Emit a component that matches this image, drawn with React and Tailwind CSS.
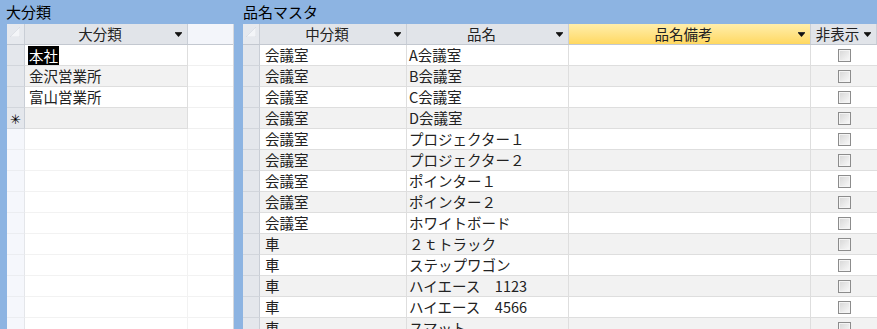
import React from "react";

const FONT = { fontFamily: '"Noto Sans CJK JP", "Noto Sans", sans-serif' };

const items = [
  ["会議室", "A会議室"],
  ["会議室", "B会議室"],
  ["会議室", "C会議室"],
  ["会議室", "D会議室"],
  ["会議室", "プロジェクター１"],
  ["会議室", "プロジェクター２"],
  ["会議室", "ポインター１"],
  ["会議室", "ポインター２"],
  ["会議室", "ホワイトボード"],
  ["車", "２ｔトラック"],
  ["車", "ステップワゴン"],
  ["車", "ハイエース　1123"],
  ["車", "ハイエース　4566"],
  ["車", "スマット"],
];

const Arrow = () => (
  <svg width="7" height="5" viewBox="0 0 7 5" className="mr-[5px] shrink-0">
    <rect x="0" y="0" width="7" height="1" fill="#333" />
    <polygon points="0,1 7,1 3.5,5" fill="#111" />
  </svg>
);

const Corner = ({ w }) => (
  <div className={`${w} h-full shrink-0 border-r border-[#c9ced6] bg-[#e6e9ee] relative`}>
    <svg width="10" height="10" className="absolute left-[3px] top-[3px]">
      <polygon points="0,10 10,0 10,10" fill="#f3f5f8" stroke="#cfd3da" strokeWidth="0.5" />
    </svg>
  </div>
);

const HeadCell = ({ w, label, active }) => (
  <div
    className={`${w} h-full shrink-0 flex items-center border-r border-[#c9ced6] ${
      active ? "bg-linear-to-b from-[#ffeeaa] to-[#ffd85f]" : "bg-[#e1e4e9]"
    }`}
  >
    <span className="flex-1 text-center text-[14.5px] text-[#222]">{label}</span>
    <Arrow />
  </div>
);

const Checkbox = () => (
  <div className="w-[13px] h-[13px] border border-[#8c8c8c] bg-linear-to-br from-[#d6d6d6] to-[#fafafa] shadow-[inset_0_0_0_1px_#f4f4f4]" />
);

const LeftGrid = () => {
  const data = ["本社", "金沢営業所", "富山営業所"];
  return (
    <div className="w-[227px] h-full flex flex-col border-r border-[#d5d8de] bg-white overflow-hidden">
      <div className="h-[21px] flex border-b border-[#c3c8d0]">
        <Corner w="w-[18px]" />
        <HeadCell w="w-[163px]" label="大分類" />
        <div className="flex-1 bg-[#f3f5fa]" />
      </div>
      {data.map((t, i) => (
        <div key={t} className="h-[21px] flex shrink-0">
          <div className="w-[18px] shrink-0 bg-[#e4e7ec] border-r border-[#c9ced6] border-b border-b-[#d2d6dc]" />
          <div
            className={`w-[163px] shrink-0 flex items-center pl-[3px] border-r border-b border-[#dedede] text-[14.5px] text-[#222] ${
              i % 2 ? "bg-[#f2f2f2]" : "bg-white"
            }`}
          >
            {i === 0 ? <span className="bg-black text-white px-[1px] leading-[19px]">{t}</span> : <span className="pl-[1px]">{t}</span>}
          </div>
          <div className="flex-1 border-b border-[#f0f0f0]" />
        </div>
      ))}
      <div className="h-[21px] flex shrink-0">
        <div className="w-[18px] shrink-0 bg-[#e4e7ec] border-r border-[#c9ced6] border-b border-b-[#d2d6dc] flex items-center justify-center text-[13px] leading-none text-black">
          ✳
        </div>
        <div className="w-[163px] shrink-0 bg-[#f0f0f0] border-r border-b border-[#dedede]" />
        <div className="flex-1 border-b border-[#f0f0f0]" />
      </div>
      {Array.from({ length: 10 }).map((_, i) => (
        <div key={i} className="h-[21px] flex shrink-0">
          <div className="w-[18px] shrink-0 bg-[#f5f7fc] border-r border-[#e4e6ea] border-b border-b-[#ebedf1]" />
          <div className="w-[163px] shrink-0 border-r border-b border-[#f2f2f2]" />
          <div className="flex-1 border-b border-[#f2f2f2]" />
        </div>
      ))}
    </div>
  );
};

const RightGrid = () => (
  <div className="flex-1 h-full flex flex-col bg-white overflow-hidden">
    <div className="h-[21px] flex shrink-0 border-b border-[#c3c8d0]">
      <Corner w="w-[17px]" />
      <HeadCell w="w-[147px]" label="中分類" />
      <HeadCell w="w-[162px]" label="品名" />
      <HeadCell w="w-[242px]" label="品名備考" active />
      <HeadCell w="w-[66px]" label="非表示" />
    </div>
    {items.map(([a, b], i) => (
      <div key={i} className={`h-[21px] flex shrink-0 text-[14.5px] text-[#222] ${i % 2 ? "bg-[#f2f2f2]" : "bg-white"}`}>
        <div className="w-[17px] shrink-0 bg-[#e4e7ec] border-r border-[#c9ced6] border-b border-b-[#d2d6dc]" />
        <div className="w-[147px] shrink-0 flex items-center pl-[5px] border-r border-b border-[#dedede]">{a}</div>
        <div className="w-[162px] shrink-0 flex items-center pl-[2px] border-r border-b border-[#dedede]">{b}</div>
        <div className="w-[242px] shrink-0 border-r border-b border-[#dedede]" />
        <div className="w-[66px] shrink-0 flex items-center justify-center border-b border-[#dedede]">
          <Checkbox />
        </div>
      </div>
    ))}
  </div>
);

const App = () => {
  return (
    <div className="w-[877px] h-[329px] overflow-hidden bg-[#8db4e2] flex" style={FONT}>
      <div className="w-[243px] shrink-0 flex flex-col pl-[7px]">
        <div className="h-[24px] shrink-0 flex items-center text-[15px] text-black -ml-[1px]">大分類</div>
        <div className="flex-1 min-h-0">
          <LeftGrid />
        </div>
      </div>
      <div className="flex-1 flex flex-col min-w-0">
        <div className="h-[24px] shrink-0 flex items-center text-[15px] text-black">品名マスタ</div>
        <div className="flex-1 min-h-0 flex">
          <RightGrid />
        </div>
      </div>
    </div>
  );
};

export default App;
